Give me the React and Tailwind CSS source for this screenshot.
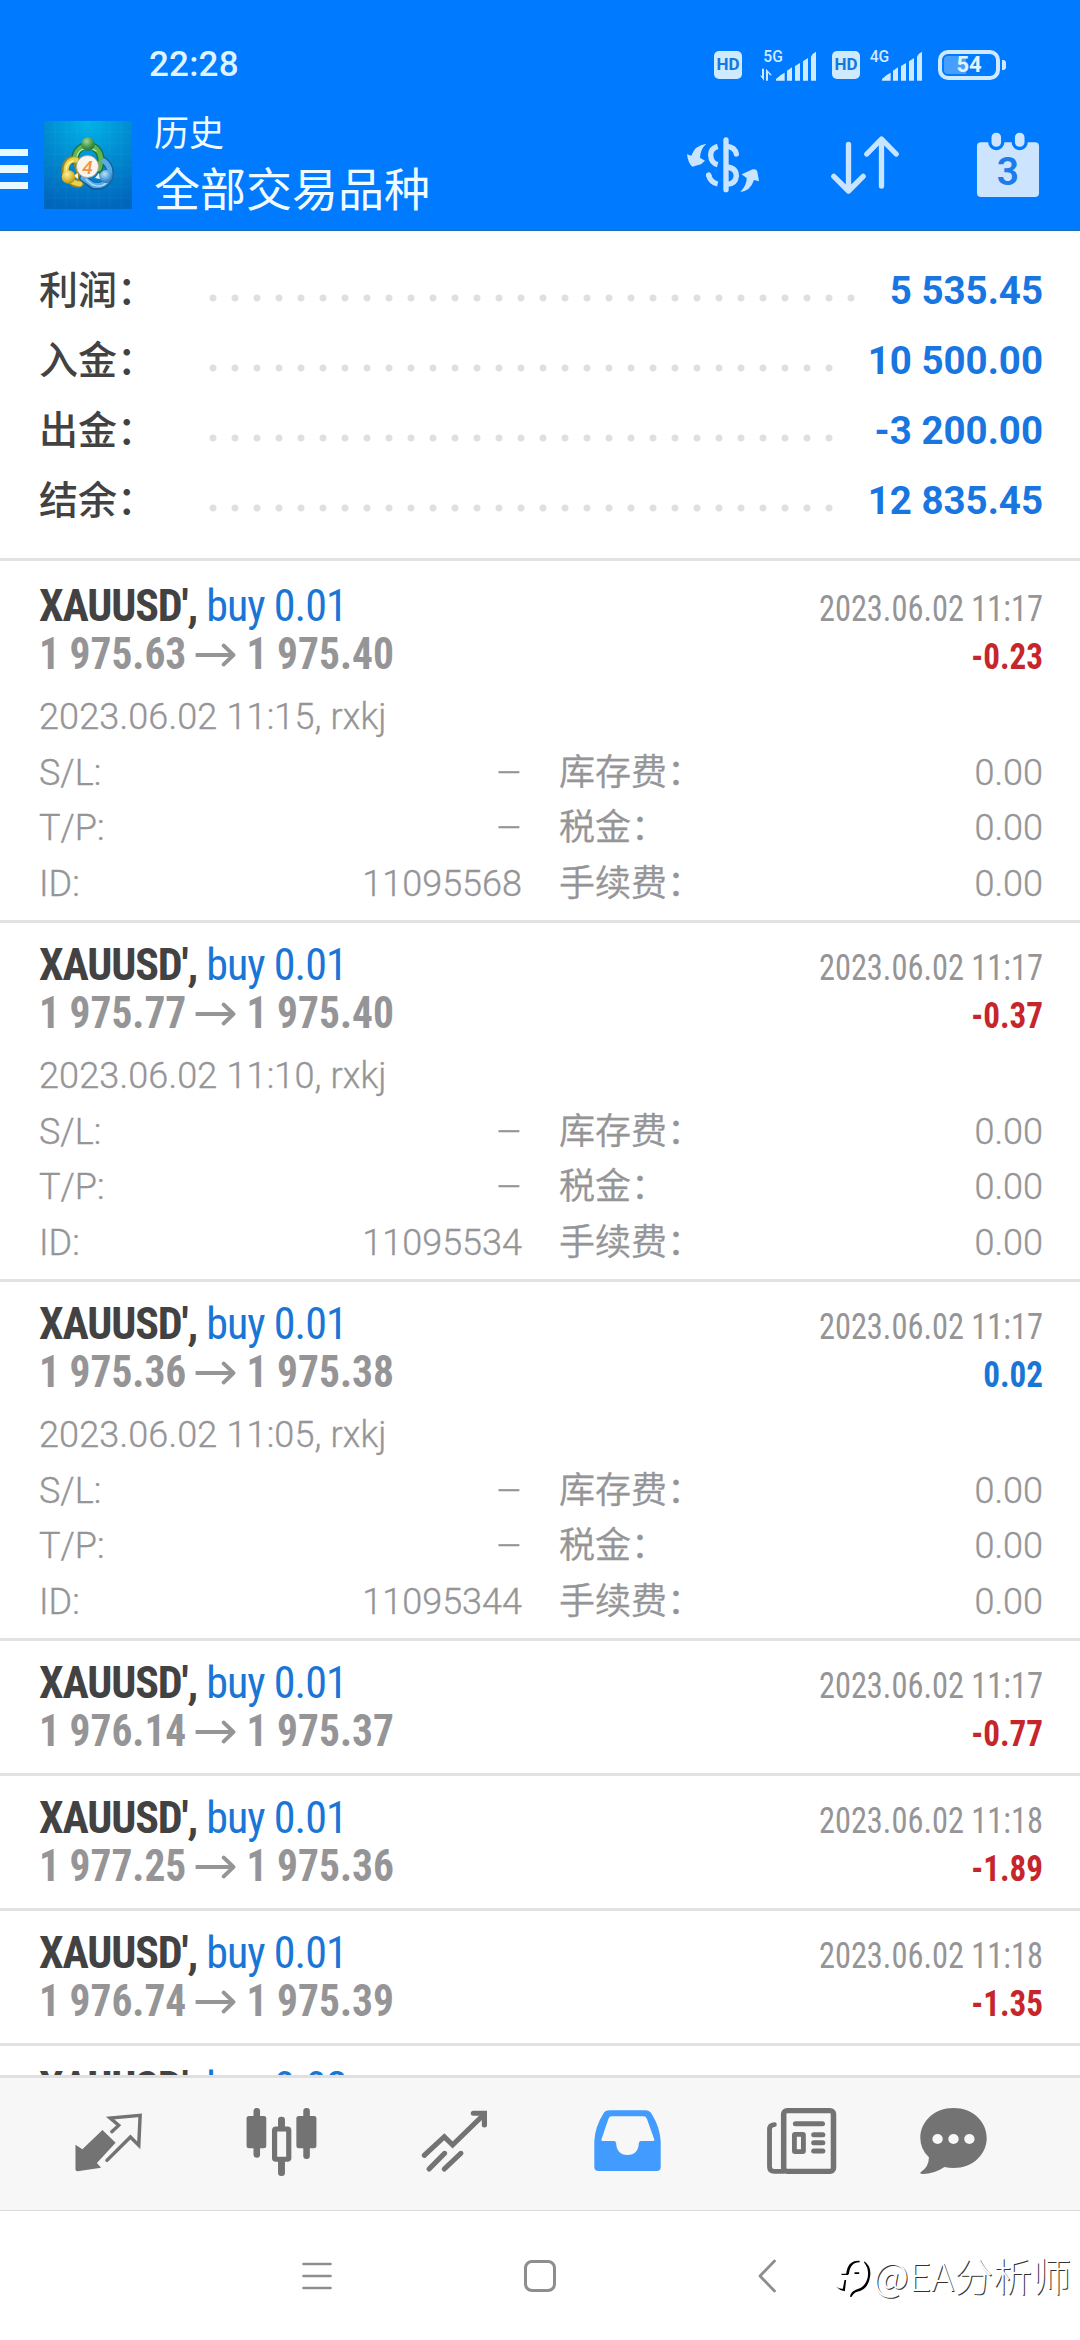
const summary = [
  { label: '利润：', value: '5 535.45', dots: 'w-[660px]' },
  { label: '入金：', value: '10 500.00', dots: 'w-[638px]' },
  { label: '出金：', value: '-3 200.00', dots: 'w-[638px]' },
  { label: '结余：', value: '12 835.45', dots: 'w-[638px]' },
];

const deals = [
  { lot: '0.01', from: '1 975.63', to: '1 975.40', closed: '2023.06.02 11:17', profit: '-0.23', opened: '2023.06.02 11:15, rxkj', id: '11095568' },
  { lot: '0.01', from: '1 975.77', to: '1 975.40', closed: '2023.06.02 11:17', profit: '-0.37', opened: '2023.06.02 11:10, rxkj', id: '11095534' },
  { lot: '0.01', from: '1 975.36', to: '1 975.38', closed: '2023.06.02 11:17', profit: '0.02', opened: '2023.06.02 11:05, rxkj', id: '11095344' },
  { lot: '0.01', from: '1 976.14', to: '1 975.37', closed: '2023.06.02 11:17', profit: '-0.77' },
  { lot: '0.01', from: '1 977.25', to: '1 975.36', closed: '2023.06.02 11:18', profit: '-1.89' },
  { lot: '0.01', from: '1 976.74', to: '1 975.39', closed: '2023.06.02 11:18', profit: '-1.35' },
  { lot: '0.02' },
];

function HdBadge() {
  return (
    <span className="flex h-7 w-7 items-center justify-center rounded-[5px] bg-[#cfe9ff] text-[17px] font-bold leading-none text-[#1577e0]">
      HD
    </span>
  );
}

function Signal({ label, data }) {
  return (
    <svg viewBox="354 76 180 102" className="h-[34px] w-[60px]" fill="#cfe9ff">
      <text x={data ? 370 : 371} y="118" fontSize="47" fontFamily="Roboto" fontWeight="500">{label}</text>
      {data && (
        <path d="M360 158l12 16V138h-6v22zM378 138v36h6v-24l6 8h6z" />
      )}
      <path d="M408 174v-5q14-14 26-19v24zM441 174v-30l15-10v40zM465 174v-44l15-9v53zM489 174v-58l15-10v68zM513 174v-72q4-10 15-15v87z" />
    </svg>
  );
}

function Battery() {
  return (
    <span className="flex items-center gap-[2px]">
      <span className="flex h-[30px] w-[62px] rounded-[10px] border-4 border-[#cfe9ff] p-[2px]">
        <span className="flex h-full w-full items-center justify-center rounded-[4px] bg-[linear-gradient(90deg,#469fff_45%,transparent_45%)] text-[22px] font-bold leading-none text-[#e3f3ff]">
          54
        </span>
      </span>
      <span className="h-[10px] w-1 rounded-r-[3px] bg-[#cfe9ff]" />
    </span>
  );
}

function AppLogo() {
  return (
    <svg viewBox="0 0 88 88" className="h-[88px] w-[88px]">
      <defs>
        <radialGradient id="sky" cx="0.5" cy="0" r="1">
          <stop offset="0" stopColor="#00b4e8" />
          <stop offset="0.5" stopColor="#008bd0" />
          <stop offset="1" stopColor="#0067bd" />
        </radialGradient>
        <radialGradient id="green" cx="0.4" cy="0.3" r="0.8">
          <stop offset="0" stopColor="#a5d795" />
          <stop offset="0.6" stopColor="#3c9341" />
          <stop offset="1" stopColor="#1d6a31" />
        </radialGradient>
        <radialGradient id="gold" cx="0.4" cy="0.3" r="0.8">
          <stop offset="0" stopColor="#fff0a0" />
          <stop offset="0.6" stopColor="#d8b72c" />
          <stop offset="1" stopColor="#94801b" />
        </radialGradient>
        <radialGradient id="blue" cx="0.4" cy="0.3" r="0.8">
          <stop offset="0" stopColor="#b9e3fb" />
          <stop offset="0.6" stopColor="#4598d6" />
          <stop offset="1" stopColor="#1e68aa" />
        </radialGradient>
      </defs>
      <rect width="88" height="88" fill="url(#sky)" />
      <path d="M11 0v88M22 0v88M33 0v88M44 0v88M55 0v88M66 0v88M77 0v88M0 11h88M0 22h88M0 33h88M0 44h88M0 55h88M0 66h88M0 77h88" stroke="#fff" strokeOpacity="0.06" strokeWidth="0.7" />
      <g fill="none" strokeLinecap="round">
        <path d="M31 40C30 20 57 19 57 40L55 48" stroke="#1c6b3b" strokeWidth="7.5" />
        <path d="M34 62C13 60 21 34 32 39L38 60C37 63 33 65 28 61" stroke="#9a8420" strokeWidth="7" />
        <path d="M60 40C72 49 65 68 49 65L39 57" stroke="#155d9c" strokeWidth="7.5" />
        <path d="M31 40C30 20 57 19 57 40L55 48" stroke="#62b54e" strokeWidth="5" />
        <path d="M36 63C15 60 21 36 32 39" stroke="#ead14a" strokeWidth="5" />
        <path d="M60 40C72 49 65 68 49 64L39 57" stroke="#58abe4" strokeWidth="5" />
        <path d="M33 35C35 27 46 25 52 30" stroke="#b3e29a" strokeWidth="1.4" />
        <path d="M22 50C22 44 25 41 29 40" stroke="#fff3a5" strokeWidth="1.4" />
        <path d="M42 58C49 67 58 66 62 62" stroke="#a6dbfb" strokeWidth="1.4" />
      </g>
      <path d="M34 52l-5 3 5 3zM55 52l-4 5 5 1z" fill="#f4f8ef" />
      <circle cx="44" cy="23" r="6.8" fill="url(#green)" />
      <circle cx="24.5" cy="56" r="6.8" fill="url(#gold)" />
      <circle cx="62" cy="55.5" r="6.5" fill="url(#blue)" />
      <circle cx="43.5" cy="45.5" r="11" fill="#fbf5ee" stroke="#a9aaa0" strokeWidth="0.8" />
      <text x="43.5" y="52.5" textAnchor="middle" fontSize="19" fontFamily="Roboto" fontStyle="italic" fontWeight="500" fill="#ee9445">4</text>
    </svg>
  );
}

function DollarIcon() {
  return (
    <svg viewBox="12 40 228 180" className="h-[60px] w-[76px]" fill="#c8e4ff">
      <path d="M18 98l13 4Q41 71 76 66Q58 82 57 108l15 9-12 11-26 7Q21 125 18 98z" />
      <path d="M182 158l33-15q12-2 14 7l5 29-15-4Q208 208 178 211q20-22 19-42z" />
      <g fill="none" stroke="#c8e4ff" strokeWidth="16">
        <path d="M110 74Q89 80 89 100 90 124 110 129" />
        <path d="M135 55V204" strokeLinecap="round" />
        <path d="M138 74Q162 76 166 97" strokeLinecap="round" />
        <path d="M83 160Q88 182 110 187" />
        <path d="M138 136Q166 139 166 163 164 187 138 188" />
        <path d="M83 160l1 3" strokeLinecap="round" />
      </g>
    </svg>
  );
}

function SortIcon() {
  return (
    <svg viewBox="448 40 215 186" className="h-[62px] w-[72px]" fill="none" stroke="#c8e4ff" strokeWidth="16" strokeLinecap="round" strokeLinejoin="round">
      <path d="M506 71V210M462 167l44 44 44-44" />
      <path d="M605 196V56M561 100l44-45 44 45" />
    </svg>
  );
}

function CalendarIcon() {
  return (
    <svg viewBox="1004 330 200 204" className="h-[68px] w-[66px]">
      <rect x="1010" y="363" width="188" height="166" rx="12" fill="#cde4ff" />
      <g fill="#cde4ff" stroke="#007aff" strokeWidth="10">
        <rect x="1049" y="329" width="39" height="53" rx="19" />
        <rect x="1120" y="329" width="39" height="53" rx="19" />
      </g>
      <text x="1104" y="494" textAnchor="middle" fontSize="118" fontFamily="Roboto" fontWeight="600" fill="#1e7bea">3</text>
    </svg>
  );
}

function DealArrow() {
  return (
    <svg viewBox="0 0 44 24" className="mt-[2px] h-6 w-11" fill="none" stroke="#959597" strokeWidth="4">
      <path d="M0 12H40" />
      <path d="M30 2.500L40.500 12L30 21.500" strokeLinecap="round" strokeLinejoin="round" />
    </svg>
  );
}

function Field({ label, value }) {
  return (
    <div className="flex justify-between">
      <span>{label}</span>
      <span className={value === '–' ? 'origin-right scale-x-115' : ''}>{value}</span>
    </div>
  );
}

function Deal({ deal }) {
  const loss = deal.profit && deal.profit.startsWith('-');
  return (
    <li className={`shrink-0 border-t-[3px] border-[#e2e2e2] pl-[39px] pr-[37px] pt-[18px] first:border-transparent ${deal.opened ? 'h-[359px]' : 'h-[135px]'}`}>
      <div className="flex h-12 items-baseline justify-between font-['Roboto_Condensed','Noto_Sans_CJK_SC',sans-serif] leading-[48px]">
        <span className="whitespace-pre text-[44px] tracking-[-0.950px] text-[#1976d6]">
          <b className="font-bold tracking-[-1.150px] text-[#424242]">XAUUSD',</b> buy {deal.lot}
        </span>
        <span className="origin-right scale-x-[0.9] text-[36px] text-[#959597]">{deal.closed}</span>
      </div>
      {deal.from && (
        <div className="flex h-12 items-baseline justify-between font-['Roboto_Condensed','Noto_Sans_CJK_SC',sans-serif] font-bold leading-[48px]">
          <span className="flex origin-left scale-x-[0.942] items-center gap-[10px] text-[44px] text-[#959597]">
            {deal.from}
            <DealArrow />
            {deal.to}
          </span>
          <span className={`origin-right scale-x-[0.92] text-[36px] ${loss ? 'text-[#c6262b]' : 'text-[#1976d6]'}`}>{deal.profit}</span>
        </div>
      )}
      {deal.opened && (
        <div className="mt-3 text-[36px] font-[350] leading-[55.700px] text-[#959597] [-webkit-text-stroke:0.350px_#959597]">
          <div className="tracking-[0.150px]">{deal.opened}</div>
          <div className="grid grid-cols-[483px_1fr] gap-x-[37px]">
            <Field label="S/L:" value="–" />
            <Field label="库存费：" value="0.00" />
            <Field label="T/P:" value="–" />
            <Field label="税金：" value="0.00" />
            <Field label="ID:" value={deal.id} />
            <Field label="手续费：" value="0.00" />
          </div>
        </div>
      )}
    </li>
  );
}

/* Tab glyphs share one unit system: 240 by 240 units per icon. */
function TabIcon({ x, children, className = '' }) {
  return (
    <svg viewBox={`${x} 222 240 240`} preserveAspectRatio="none" className={`h-20 w-[83px] ${className}`}>
      {children}
    </svg>
  );
}

function TabBar() {
  return (
    <nav className="grid h-[136px] shrink-0 grid-cols-[repeat(5,173.200px)_131px] items-center justify-items-center border-b border-t-[3px] border-b-[#dadada] border-t-[#e0e0e0] bg-[#f7f7f7] pl-[21.700px] text-[#737373]">
      <TabIcon x={194.5}>
        <path d="M297 300l38 38-54 61 12 14-68 11q-6 0-6-6v-74l20 14z" fill="currentColor" />
        <path d="M324 305l20-19-25-22 87-8-4 90-24-25-68 70" fill="none" stroke="currentColor" strokeWidth="10" strokeLinecap="round" />
      </TabIcon>
      <TabIcon x={696}>
        <g fill="currentColor">
          <rect x="715" y="258" width="57" height="97" rx="7" />
          <rect x="735" y="234" width="19" height="149" rx="9" />
          <rect x="859" y="258" width="58" height="97" rx="7" />
          <rect x="879" y="234" width="19" height="153" rx="9" />
          <rect x="806" y="260" width="20" height="45" rx="9" />
          <rect x="806" y="385" width="20" height="53" rx="9" />
        </g>
        <rect x="796" y="297" width="41" height="91" rx="4" fill="#f7f7f7" stroke="currentColor" strokeWidth="15" />
      </TabIcon>
      <TabIcon x={1198.5}>
        <g fill="none" stroke="currentColor" strokeWidth="15" strokeLinecap="round">
          <path d="M1231 376l58-56 24 25 92-93" />
          <path d="M1373 250h32v35" />
          <path d="M1245 417l45-47M1289 417l48-47" />
        </g>
      </TabIcon>
      <TabIcon x={134} className="text-[#429bff]">
        <path d="M202 241h104q12 0 18 11 24 40 26 82v76q0 13-12 13H171q-13 0-13-13v-76q2-44 26-83 6-10 18-10z" fill="currentColor" />
        <path d="M208 259h92q7 0 10 7l21 61q2 6-4 6h-34q-5 0-6 6-2 36-33 36t-33-36q-1-6-6-6h-32q-6 0-4-6l20-61q3-7 9-7z" fill="#f7f7f7" />
      </TabIcon>
      <TabIcon x={637.5}>
        <g fill="none" stroke="currentColor" strokeLinecap="round">
          <rect x="706" y="242" width="144" height="182" rx="10" strokeWidth="16" />
          <path d="M706 424h-27q-14 0-14-14V299q0-14 14-15" strokeWidth="14" />
          <path d="M740 281h78M793 314h26M793 338h26M793 363h26" strokeWidth="15" />
          <rect x="737" y="313" width="26" height="52" rx="2" strokeWidth="14" />
        </g>
      </TabIcon>
      <TabIcon x={1079}>
        <path d="M1199 234c55 0 96 40 96 90s-41 90-96 90q-14 0-26-3-30 21-63 21-10 0-6-5 24-16 24-45-25-24-25-58c0-50 41-90 96-90z" fill="currentColor" />
        <g fill="#f7f7f7">
          <circle cx="1153" cy="327" r="15" />
          <circle cx="1199" cy="327" r="15" />
          <circle cx="1245" cy="327" r="15" />
        </g>
      </TabIcon>
    </nav>
  );
}

function Watermark() {
  return (
    <div className="absolute right-[9px] top-[35px] flex items-center text-white">
      <svg viewBox="30 38 116 126" className="mt-[5px] h-[42px] w-[39px]">
        <path d="M66 92Q70 50 106 52L107 57Q78 56 74 93z" />
        <path d="M120 54Q142 68 138 98 132 140 99 145 87 149 83 160L77 160Q80 145 95 139 122 134 130 105 136 76 120 58z" />
        <path d="M52 91h20v4H52zM61 110h5l-4 34q-16-3-26-14 12 8 20 6zM91 87h14v5H91z" />
      </svg>
      <span className="font-['Noto_Sans_CJK_SC',sans-serif] text-[39px] font-light leading-[56px] [text-shadow:1px_1px_0_#333]">
        @EA分析师
      </span>
    </div>
  );
}

export default function App() {
  return (
    <div className="flex h-[2340px] w-[1080px] flex-col overflow-hidden bg-white font-['Roboto','Noto_Sans_CJK_SC',sans-serif]">
      <header className="flex h-[231px] shrink-0 flex-col border-b border-[#1a6fc4] bg-[#007aff]">
        <div className="flex h-[100px] items-center pl-[149px] pr-[74px] pt-[29px] text-[#dff3ff]">
          <span className="grow text-[35px] font-medium leading-none tracking-[0.200px]">22:28</span>
          <div className="flex items-center">
            <HdBadge />
            <span className="ml-4 flex"><Signal label="5G" data /></span>
            <span className="ml-[14px] flex"><HdBadge /></span>
            <span className="ml-[4px] flex"><Signal label="4G" /></span>
            <span className="ml-[14px] flex"><Battery /></span>
          </div>
        </div>
        <div className="flex h-[130px] items-center pr-[39px]">
          <div className="mt-2 flex flex-col gap-[9px]">
            <span className="h-[7.500px] w-7 bg-[#e8faff]" />
            <span className="h-[7.500px] w-7 bg-[#e8faff]" />
            <span className="h-[7.500px] w-7 bg-[#e8faff]" />
          </div>
          <span className="ml-4"><AppLogo /></span>
          <div className="ml-[22px] grow text-[#f0fbff]">
            <div className="text-[35px] leading-[50px]">历史</div>
            <div className="text-[46px] leading-[60px]">全部交易品种</div>
          </div>
          <div className="flex items-center">
            <DollarIcon />
            <span className="ml-[68px]"><SortIcon /></span>
            <span className="ml-[74px]"><CalendarIcon /></span>
          </div>
        </div>
      </header>

      <section className="shrink-0 border-b-[3px] border-[#e2e2e2] pb-[22px] pl-[39px] pr-[37px] pt-[25px]">
        {summary.map((row) => (
          <div key={row.label} className="flex h-[70px] items-center text-[38.500px] leading-[70px]">
            <span className="w-[163px] text-[39px] font-medium text-[#424242]">{row.label}</span>
            <span className={`mt-[14px] h-[22px] bg-[radial-gradient(circle,#dfdfdf_3px,transparent_4px)] bg-[length:22px_22px] ${row.dots}`} />
            <span className="grow text-right font-bold text-[#1976e0]">{row.value}</span>
          </div>
        ))}
      </section>

      <ul className="flex min-h-0 grow flex-col overflow-hidden">
        {deals.map((deal, i) => (
          <Deal key={i} deal={deal} />
        ))}
      </ul>

      <TabBar />

      <footer className="relative flex h-[129px] shrink-0 items-center pl-[302px]">
        <svg viewBox="0 0 30 28" className="h-7 w-[30px]" stroke="#8e8e8e" strokeWidth="2.6" strokeLinecap="round">
          <path d="M1.500 2h27M1.500 14h27M1.500 26h27" />
        </svg>
        <span className="ml-[192px] h-8 w-8 rounded-[8px] border-[3px] border-[#8e8e8e]" />
        <svg viewBox="0 0 18 34" className="ml-[202px] h-[34px] w-[18px]" fill="none" stroke="#8e8e8e" strokeWidth="2.8" strokeLinecap="round" strokeLinejoin="round">
          <path d="M16.500 2L2 17l14.500 15" />
        </svg>
        <Watermark />
      </footer>
    </div>
  );
}
